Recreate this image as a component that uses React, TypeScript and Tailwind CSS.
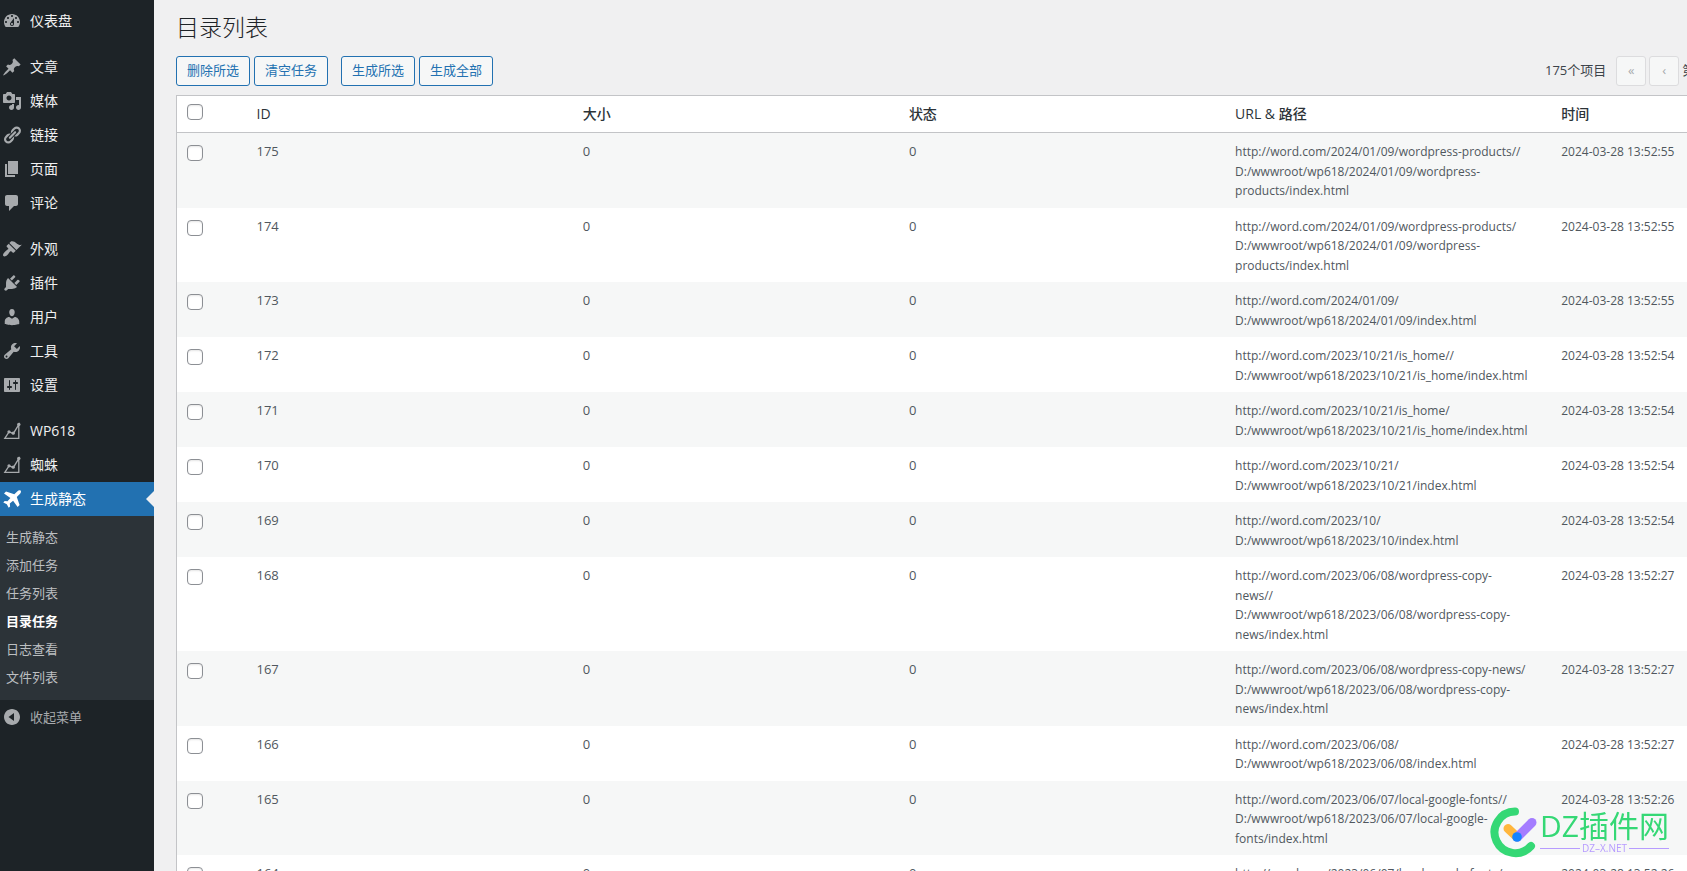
import type { ReactNode } from "react";

interface MenuItem {
  label: string;
  icon: ReactNode;
}

interface TaskRow {
  id: number;
  size: number;
  status: number;
  url: string;
  path: string;
  time: string;
}

// 20x20 admin menu icons
const icons = {
  dashboard: (
    <path d="M3.76 16h12.48c1.1-1.37 1.76-3.11 1.76-5 0-4.42-3.58-8-8-8s-8 3.58-8 8c0 1.89.66 3.63 1.76 5zM10 4c.55 0 1 .45 1 1s-.45 1-1 1-1-.45-1-1 .45-1 1-1zM6 6c.55 0 1 .45 1 1s-.45 1-1 1-1-.45-1-1 .45-1 1-1zm8 0c.55 0 1 .45 1 1s-.45 1-1 1-1-.45-1-1 .45-1 1-1zm-5.37 5.55L12 7v6c0 1.1-.9 2-2 2s-2-.9-2-2c0-.57.24-1.08.63-1.45zM4 10c.55 0 1 .45 1 1s-.45 1-1 1-1-.45-1-1 .45-1 1-1zm12 0c.55 0 1 .45 1 1s-.45 1-1 1-1-.45-1-1 .45-1 1-1zm-5 3c0-.55-.45-1-1-1s-1 .45-1 1 .45 1 1 1 1-.45 1-1z" />
  ),
  post: (
    <path d="M10.44 3.02l1.82-1.82 6.36 6.35-1.83 1.82c-1.05-.68-2.48-.57-3.41.36l-.75.75c-.92.93-1.04 2.35-.35 3.41l-1.83 1.82-2.41-2.41-2.8 2.79c-.42.42-3.38 2.71-3.8 2.29s1.86-3.39 2.28-3.81l2.79-2.79L4.1 9.36l1.83-1.82c1.05.69 2.48.57 3.4-.36l.75-.75c.93-.92 1.05-2.35.36-3.41z" />
  ),
  media: (
    <path d="M13 11V4c0-.55-.45-1-1-1h-1.67L9 1H5L3.67 3H2c-.55 0-1 .45-1 1v7c0 .55.45 1 1 1h10c.55 0 1-.45 1-1zM7 4.5c1.38 0 2.5 1.12 2.5 2.5S8.38 9.5 7 9.5 4.5 8.38 4.5 7 5.62 4.5 7 4.5zM14 6h5v10.5c0 1.38-1.12 2.5-2.5 2.5S14 17.88 14 16.5s1.12-2.5 2.5-2.5c.17 0 .34.02.5.05V9h-3V6zm-4 8.05V13h2v3.5c0 1.38-1.12 2.5-2.5 2.5S7 17.88 7 16.5 8.12 14 9.5 14c.17 0 .34.02.5.05z" />
  ),
  links: (
    <path d="M17.74 2.76c1.68 1.69 1.68 4.41 0 6.1l-1.53 1.52c-1.12 1.12-2.7 1.47-4.14 1.09l2.62-2.61.76-.77.76-.76c.84-.84.84-2.2 0-3.04-.84-.85-2.2-.85-3.04 0l-.77.76-3.38 3.38c-.37-1.44-.02-3.02 1.1-4.14l1.52-1.53c1.69-1.68 4.42-1.68 6.1 0zM8.59 13.43l5.34-5.34c.42-.42.42-1.1 0-1.52-.44-.43-1.13-.39-1.53 0l-5.33 5.34c-.42.42-.42 1.1 0 1.52.44.43 1.13.39 1.52 0zm-.76 2.29l4.14-4.15c.38 1.44.03 3.02-1.09 4.14l-1.52 1.53c-1.69 1.68-4.41 1.68-6.1 0-1.68-1.68-1.68-4.42 0-6.1l1.53-1.52c1.12-1.12 2.7-1.47 4.14-1.1l-4.14 4.15c-.85.84-.85 2.2 0 3.05.84.84 2.2.84 3.04 0z" />
  ),
  page: <path d="M6 15V2h10v13H6zm-1 1h8v2H3V5h2v11z" />,
  comments: (
    <path d="M5 2h9c1.1 0 2 .9 2 2v7c0 1.1-.9 2-2 2h-2l-5 5v-5H5c-1.1 0-2-.9-2-2V4c0-1.1.9-2 2-2z" />
  ),
  appearance: (
    <path d="M14.48 11.06L7.41 3.99l1.5-1.5c.5-.56 2.3-.47 3.51.32 1.21.8 1.43 1.28 2.91 2.1 1.18.64 2.45 1.26 4.45.85zm-.71.71L6.7 4.7 4.93 6.47c-.39.39-.39 1.02 0 1.41l1.06 1.06c.39.39.39 1.03 0 1.42-.6.6-1.43 1.11-2.21 1.69-.35.26-.7.53-1.01.84C1.43 14.23.4 16.08 1.4 17.07c.99 1 2.84-.03 4.18-1.36.31-.31.58-.66.85-1.02.57-.78 1.08-1.61 1.69-2.21.39-.39 1.02-.39 1.41 0l1.06 1.06c.39.39 1.02.39 1.41 0z" />
  ),
  plugins: (
    <path d="M13.11 4.36L9.87 7.6 8 5.73l3.24-3.24c.35-.34 1.05-.2 1.56.32.52.51.66 1.21.31 1.55zm-8 1.77l.91-1.12 9.01 9.01-1.19.84c-.71.71-2.63 1.16-3.82 1.16H6.14L4.9 17.26c-.59.59-1.54.59-2.12 0-.59-.58-.59-1.53 0-2.12l1.24-1.24v-3.88c0-1.13.4-3.19 1.09-3.89zm7.26 3.97l3.24-3.24c.34-.35 1.04-.21 1.55.31.52.51.66 1.21.31 1.55l-3.24 3.25z" />
  ),
  users: (
    <path d="M10 9.25c-2.27 0-2.73-3.44-2.73-3.44C7 4.02 7.82 2 9.97 2c2.16 0 2.98 2.02 2.71 3.81 0 0-.41 3.44-2.68 3.44zm0 2.57L12.72 10c2.39 0 4.52 2.33 4.52 4.53v2.49s-3.65 1.13-7.24 1.13c-3.65 0-7.24-1.13-7.24-1.13v-2.49c0-2.25 1.94-4.48 4.47-4.48z" />
  ),
  tools: (
    <path d="M16.68 9.77c-1.34 1.34-3.3 1.67-4.95.99l-5.41 6.52c-.99.99-2.59.99-3.58 0s-.99-2.59 0-3.57l6.52-5.42c-.68-1.65-.35-3.61.99-4.95 1.28-1.28 3.12-1.62 4.72-1.06l-2.89 2.89 2.82 2.82 2.86-2.87c.53 1.58.18 3.39-1.08 4.65zM3.81 16.21c.4.39 1.04.39 1.43 0 .4-.4.4-1.04 0-1.43-.39-.4-1.03-.4-1.43 0-.39.39-.39 1.03 0 1.43z" />
  ),
  settings: (
    <path d="M18 16V4c0-.55-.45-1-1-1H3c-.55 0-1 .45-1 1v12c0 .55.45 1 1 1h14c.55 0 1-.45 1-1zM8 11h1c.55 0 1 .45 1 1s-.45 1-1 1H8v1.5c0 .28-.22.5-.5.5s-.5-.22-.5-.5V13H6c-.55 0-1-.45-1-1s.45-1 1-1h1V5.5c0-.28.22-.5.5-.5s.5.22.5.5V11zm5-2h-1c-.55 0-1-.45-1-1s.45-1 1-1h1V5.5c0-.28.22-.5.5-.5s.5.22.5.5V7h1c.55 0 1 .45 1 1s-.45 1-1 1h-1v5.5c0 .28-.22.5-.5.5s-.5-.22-.5-.5V9z" />
  ),
  chart: (
    <>
      <path
        d="M2.800 17.400L7 11l4.400 1.400L16.800 3.600v13.800z"
        fill="none"
        stroke="currentColor"
        strokeWidth="1.300"
      />
      <circle cx="16.800" cy="3.400" r="1.700" />
      <circle cx="11.200" cy="12.200" r="1.600" />
      <circle cx="7" cy="10.800" r="1.600" />
    </>
  ),
  airplane: (
    <path d="M18.700 1.700c-.8-.8-2.500-.3-3.500.7l-2.900 2.900L4 2.500 2 4.500l6.400 4.600-2.900 3.200L2.700 12l-1.400 1.400 3.500 1.900 1.900 3.500L8.100 17.400l-.3-2.800 3.300-2.800 4.500 6.300 2-2-2.800-8.200 3-2.900c1-1 1.600-2.500.9-3.300z" />
  ),
  collapse: (
    <path
      fillRule="evenodd"
      d="M10 2c4.42 0 8 3.58 8 8s-3.58 8-8 8-8-3.58-8-8 3.58-8 8-8zm2 12V6l-5.500 4z"
    />
  ),
};

const menuGroups: MenuItem[][] = [
  [{ label: "仪表盘", icon: icons.dashboard }],
  [
    { label: "文章", icon: icons.post },
    { label: "媒体", icon: icons.media },
    { label: "链接", icon: icons.links },
    { label: "页面", icon: icons.page },
    { label: "评论", icon: icons.comments },
  ],
  [
    { label: "外观", icon: icons.appearance },
    { label: "插件", icon: icons.plugins },
    { label: "用户", icon: icons.users },
    { label: "工具", icon: icons.tools },
    { label: "设置", icon: icons.settings },
  ],
  [
    { label: "WP618", icon: icons.chart },
    { label: "蜘蛛", icon: icons.chart },
  ],
];

const submenu = ["生成静态", "添加任务", "任务列表", "目录任务", "日志查看", "文件列表"];
const currentSubmenu = "目录任务";

const makeRow = (id: number, slug: string, time: string, extraSlash = false): TaskRow => ({
  id,
  size: 0,
  status: 0,
  url: `http://word.com/${slug}/${extraSlash ? "/" : ""}`,
  path: `D:/wwwroot/wp618/${slug}/index.html`,
  time: `2024-03-28 ${time}`,
});

const rows: TaskRow[] = [
  makeRow(175, "2024/01/09/wordpress-products", "13:52:55", true),
  makeRow(174, "2024/01/09/wordpress-products", "13:52:55"),
  makeRow(173, "2024/01/09", "13:52:55"),
  makeRow(172, "2023/10/21/is_home", "13:52:54", true),
  makeRow(171, "2023/10/21/is_home", "13:52:54"),
  makeRow(170, "2023/10/21", "13:52:54"),
  makeRow(169, "2023/10", "13:52:54"),
  makeRow(168, "2023/06/08/wordpress-copy-news", "13:52:27", true),
  makeRow(167, "2023/06/08/wordpress-copy-news", "13:52:27"),
  makeRow(166, "2023/06/08", "13:52:27"),
  makeRow(165, "2023/06/07/local-google-fonts", "13:52:26", true),
  makeRow(164, "2023/06/07/local-google-fonts", "13:52:26"),
];

const columns = ["ID", "大小", "状态", "URL & 路径", "时间"];

function Icon({ children }: { children: ReactNode }) {
  return (
    <svg viewBox="0 0 20 20" className="size-5 shrink-0 fill-current" aria-hidden="true">
      {children}
    </svg>
  );
}

function ActionButton({ children }: { children: ReactNode }) {
  return (
    <button
      type="button"
      className="h-[30px] whitespace-nowrap rounded-[3px] border border-[#2271b1] bg-[#f6f7f7] px-2.5 text-[13px] text-[#2271b1] hover:bg-[#f0f0f1]"
    >
      {children}
    </button>
  );
}

function PagerButton({ label, children }: { label: string; children: ReactNode }) {
  return (
    <button
      type="button"
      disabled
      aria-label={label}
      className="size-[30px] shrink-0 rounded-[3px] border border-[#dcdcde] bg-[#f6f7f7] text-[13px] text-[#a7aaad]"
    >
      {children}
    </button>
  );
}

function Checkbox({ label }: { label: string }) {
  return (
    <input
      type="checkbox"
      aria-label={label}
      className="block size-4 appearance-none rounded-[4px] border border-[#8c8f94] bg-white shadow-[inset_0_1px_2px_rgba(0,0,0,0.1)] checked:bg-[#2271b1]"
    />
  );
}

function Sidebar() {
  return (
    <nav className="w-[154px] shrink-0 bg-[#1d2327] pt-1 text-sm text-[#f0f0f1]">
      {menuGroups.map((group) => (
        <ul key={group[0].label} className={group[0].label === "WP618" ? "" : "mb-3"}>
          {group.map((item) => (
            <li key={item.label}>
              <a href="#" className="flex h-[34px] items-center gap-2 pl-0.5 hover:text-[#72aee6]">
                <span className="text-[#a7aaad]">
                  <Icon>{item.icon}</Icon>
                </span>
                {item.label}
              </a>
            </li>
          ))}
        </ul>
      ))}
      <a
        href="#"
        className="relative flex h-[34px] items-center gap-2 bg-[#2271b1] pl-0.5 text-white"
      >
        <Icon>{icons.airplane}</Icon>
        生成静态
        <span className="absolute top-1/2 right-0 -translate-y-1/2 border-y-8 border-r-8 border-y-transparent border-r-[#f0f0f1]" />
      </a>
      <ul className="bg-[#2c3338] pt-[7px] pb-[9px] text-[13px]">
        {submenu.map((label) => (
          <li key={label}>
            <a
              href="#"
              className={`flex h-7 items-center pl-1.5 ${
                label === currentSubmenu ? "font-semibold text-white" : "text-[#bcbfc1]"
              }`}
            >
              {label}
            </a>
          </li>
        ))}
      </ul>
      <button
        type="button"
        className="flex h-[34px] w-full items-center gap-2 pl-0.5 text-[13px] text-[#a7aaad]"
      >
        <Icon>{icons.collapse}</Icon>
        收起菜单
      </button>
    </nav>
  );
}

function Toolbar() {
  return (
    <div className="mt-[13px] flex items-center justify-between">
      <div className="flex gap-[13px]">
        <div className="flex gap-1">
          <ActionButton>删除所选</ActionButton>
          <ActionButton>清空任务</ActionButton>
        </div>
        <div className="flex gap-1">
          <ActionButton>生成所选</ActionButton>
          <ActionButton>生成全部</ActionButton>
        </div>
      </div>
      <div className="flex w-[333px] items-center gap-[3px] whitespace-nowrap text-[13px] text-[#3c434a]">
        <span className="mr-[7px]">175个项目</span>
        <PagerButton label="首页">«</PagerButton>
        <PagerButton label="上一页">‹</PagerButton>
        <span>第</span>
      </div>
    </div>
  );
}

function TaskTable() {
  return (
    <table className="mt-[9px] w-full table-fixed border-collapse border border-[#c3c4c7] bg-white text-left text-[13px] leading-normal text-[#50575e]">
      <thead className="border-b border-[#c3c4c7] text-sm text-[#2c3338]">
        <tr>
          <th className="w-[70px] px-2.5 pt-2 pb-3 align-top">
            <Checkbox label="全选" />
          </th>
          {columns.map((name) => (
            <th key={name} className="px-2.5 py-2 align-top font-medium leading-5">
              {name}
            </th>
          ))}
        </tr>
      </thead>
      <tbody>
        {rows.map((row) => (
          <tr key={row.id} className="align-top odd:bg-[#f6f7f7]">
            <td className="px-2.5 pt-3">
              <Checkbox label={`选择 ${row.id}`} />
            </td>
            <td className="px-2.5 pt-[9px] pb-[7px]">{row.id}</td>
            <td className="px-2.5 pt-[9px] pb-[7px]">{row.size}</td>
            <td className="px-2.5 pt-[9px] pb-[7px]">{row.status}</td>
            <td className="pt-[9px] pr-6 pb-[7px] pl-2.5">
              <span className="text-xs leading-normal">
                {row.url}
                <br />
                {row.path}
              </span>
            </td>
            <td className="px-2.5 pt-[9px] pb-[7px]">
              <span className="text-xs leading-normal">{row.time}</span>
            </td>
          </tr>
        ))}
      </tbody>
    </table>
  );
}

function Watermark() {
  return (
    <div className="pointer-events-none fixed right-[18px] bottom-[13px] flex items-center gap-0.5">
      <svg viewBox="0 0 48 52" className="h-[52px] w-12" aria-hidden="true">
        <path
          d="M25 5.500A20.800 20.800 0 1 0 41 40"
          fill="none"
          stroke="#35d875"
          strokeWidth="8"
          strokeLinecap="round"
        />
        <path d="M18 22.500L27 31" stroke="#ffb63d" strokeWidth="9" strokeLinecap="round" />
        <path d="M42 16.500L27.500 31" stroke="#a47dff" strokeWidth="9" strokeLinecap="round" />
        <circle cx="27" cy="31" r="4.800" fill="#1684ff" />
      </svg>
      <div className="flex flex-col">
        <span className="text-[30px] leading-8 text-[#35d875]">DZ插件网</span>
        <div className="flex items-center gap-0.5 text-[10px] leading-3 text-[#b79cff]">
          <span className="h-px flex-1 bg-[#b79cff]" />
          DZ–X.NET
          <span className="h-px flex-1 bg-[#b79cff]" />
        </div>
      </div>
    </div>
  );
}

export default function App() {
  return (
    <div className="flex h-screen overflow-hidden bg-[#f0f0f1] font-['Open_Sans','Noto_Sans_CJK_SC',sans-serif]">
      <Sidebar />
      <main className="min-w-0 flex-1 overflow-hidden pl-[22px]">
        <div className="min-w-[1702px]">
          <h1 className="pt-[11px] text-[23px] leading-8 font-light text-[#1d2327]">目录列表</h1>
          <Toolbar />
          <TaskTable />
        </div>
      </main>
      <Watermark />
    </div>
  );
}
